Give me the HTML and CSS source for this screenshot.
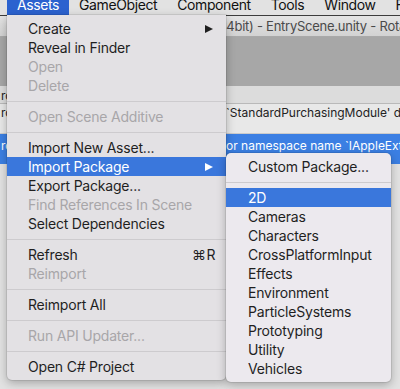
FILE: index.html
```html
<!DOCTYPE html>
<html lang="en">
<head>
    <meta charset="UTF-8">
    <meta name="viewport" content="width=device-width, initial-scale=1.0">
    <title>Assets menu</title>
    <link rel="stylesheet" href="styles.css">
</head>
<body>

<div class="menubar">
    <span class="menubar-item open">Assets</span>
    <span class="menubar-item">GameObject</span>
    <span class="menubar-item">Component</span>
    <span class="menubar-item">Tools</span>
    <span class="menubar-item">Window</span>
    <span class="menubar-item">Facebook</span>
</div>

<div class="window">
    <div class="titlebar">(64bit) - EntryScene.unity - RotateMaze - PC, Mac &amp; Linux Standalone</div>
    <div class="scene"></div>
    <div class="console">
        <div class="entry first">
            <span class="where">rc/Purchasing/IAPButton.cs</span>
        </div>
        <div class="entry">
            <span class="where">rc/Purchasing/IAPListener.cs(14,17): error CS0246: The type</span>
            <span class="what">`StandardPurchasingModule' does not exist in the current context</span>
        </div>
        <div class="entry selected">
            <span class="where">rc/Purchasing/IAPDemo.cs(32,9): error CS0246: The type</span>
            <span class="what">or namespace name `IAppleExtensions' could not be found</span>
        </div>
    </div>
</div>

<!-- Assets dropdown -->
<div class="menu main-menu">
    <div class="item">Create <span class="arrow"></span></div>
    <div class="item">Reveal in Finder</div>
    <div class="item disabled">Open</div>
    <div class="item disabled">Delete</div>
    <div class="sep"></div>
    <div class="item disabled">Open Scene Additive</div>
    <div class="sep"></div>
    <div class="item">Import New Asset...</div>
    <div class="item active">Import Package <span class="arrow"></span></div>
    <div class="item">Export Package...</div>
    <div class="item disabled">Find References In Scene</div>
    <div class="item">Select Dependencies</div>
    <div class="sep"></div>
    <div class="item">Refresh <span class="shortcut">⌘R</span></div>
    <div class="item disabled">Reimport</div>
    <div class="sep"></div>
    <div class="item">Reimport All</div>
    <div class="sep"></div>
    <div class="item disabled">Run API Updater...</div>
    <div class="sep"></div>
    <div class="item">Open C# Project</div>
</div>

<!-- Import Package submenu -->
<div class="menu sub-menu">
    <div class="item">Custom Package...</div>
    <div class="sep"></div>
    <div class="item active">2D</div>
    <div class="item">Cameras</div>
    <div class="item">Characters</div>
    <div class="item">CrossPlatformInput</div>
    <div class="item">Effects</div>
    <div class="item">Environment</div>
    <div class="item">ParticleSystems</div>
    <div class="item">Prototyping</div>
    <div class="item">Utility</div>
    <div class="item">Vehicles</div>
</div>

</body>
</html>
```

FILE: styles.css
```css
body {
    margin: 0;
    width: 400px;
    height: 389px;
    overflow: hidden;
    position: relative;
    font-family: Inter, "Noto Sans", sans-serif;
    background: #e2e2e2;
}

/* top menu bar */
.menubar {
    height: 15px;
    padding-left: 7px;
    display: flex;
    overflow: hidden;
    background: #e2e2e2;
}

.menubar-item {
    flex-shrink: 0;
    height: 15px;
    box-sizing: border-box;
    padding: 0 10px 2px;
    display: flex;
    align-items: flex-end;
    overflow: hidden;
    font-size: 14px;
    line-height: 17px;
    letter-spacing: -0.4px;
    color: #111;
    white-space: nowrap;
}

.menubar-item.open {
    background: #2b62cf;
    color: white;
}

/* editor window behind the menu */
.window {
    border-top: 1px solid #3c3c3c;
}

.titlebar {
    height: 20px;
    line-height: 21px;
    padding-left: 214px;
    background: linear-gradient(#e4e4e4, #d2d2d2);
    border-bottom: 1px solid #a9a9a9;
    font-size: 13px;
    letter-spacing: -0.25px;
    color: #4a4a4a;
    white-space: nowrap;
    overflow: hidden;
}

.scene {
    height: 49px;
    background: #a7a7a7;
}

.console {
    background: #e2e2e2;
}

.entry {
    height: 30px;
    padding: 1px 0 0 1px;
    box-sizing: border-box;
    display: flex;
    font-size: 12px;
    line-height: 16px;
    color: #222;
    white-space: nowrap;
    overflow: hidden;
    border-bottom: 1px solid #cbcbcb;
    background: #e8e8e8;
}

.entry .where {
    width: 225px;
    flex-shrink: 0;
    overflow: hidden;
}

.entry.first {
    height: 18px;
    padding-top: 2px;
    background: #dcdcdc;
    border-bottom-color: #b9b9b9;
}

.entry.selected {
    background: #3b7fe3;
    color: white;
    padding-top: 4px;
    border-bottom: none;
}

/* dropdown menus */
.menu {
    position: absolute;
    padding: 4px 0;
    background: #e3e1e4;
    box-shadow: 0 3px 10px rgba(0, 0, 0, 0.28), 0 0 0 1px rgba(0, 0, 0, 0.08);
    font-size: 14px;
    letter-spacing: -0.2px;
    color: #1f1f1f;
}

.main-menu {
    left: 7px;
    top: 15px;
    width: 219px;
    border-radius: 0 0 5px 5px;
}

.sub-menu {
    left: 226px;
    top: 153px;
    width: 165px;
    border-radius: 5px;
    background: #ece9ee;
}

.item {
    height: 19px;
    line-height: 19px;
    padding: 0 10px 0 21px;
    display: flex;
    justify-content: space-between;
    align-items: center;
    white-space: nowrap;
}

.sub-menu .item {
    padding-left: 22px;
}

.item.disabled {
    color: #a8a6a9;
}

.item.active {
    background: #3a77dc;
    color: white;
}

.arrow {
    width: 0;
    height: 0;
    margin-right: 3px;
    border-left: 8px solid #1f1f1f;
    border-top: 4.5px solid transparent;
    border-bottom: 4.5px solid transparent;
}

.item.active .arrow {
    border-left-color: white;
}

.shortcut {
    letter-spacing: 0.5px;
}

.sep {
    height: 1px;
    margin: 6px 0 5px;
    background: #cdcbce;
}
```
